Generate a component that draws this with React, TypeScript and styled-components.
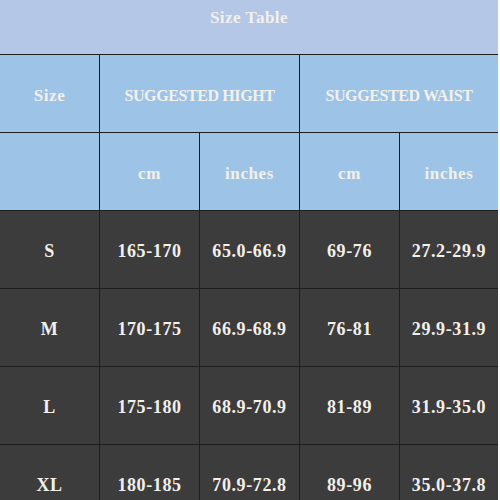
import React from 'react';
import styled, { createGlobalStyle } from 'styled-components';

const GlobalStyle = createGlobalStyle`
  html, body {
    margin: 0;
    padding: 0;
    background: #ffffff;
  }
  body {
    font-family: "Liberation Serif", "DejaVu Serif", serif;
  }
`;

type Row = { size: string; values: string[] };

const rows: Row[] = [
  { size: 'S', values: ['165-170', '65.0-66.9', '69-76', '27.2-29.9'] },
  { size: 'M', values: ['170-175', '66.9-68.9', '76-81', '29.9-31.9'] },
  { size: 'L', values: ['175-180', '68.9-70.9', '81-89', '31.9-35.0'] },
  { size: 'XL', values: ['180-185', '70.9-72.8', '89-96', '35.0-37.8'] },
];

const App: React.FC = () => (
  <>
    <GlobalStyle />
    <Table>
      <Title>Size Table</Title>
      <HeadCell>Size</HeadCell>
      <HeadCell $span={2} $caps>SUGGESTED HIGHT</HeadCell>
      <HeadCell $span={2} $caps>SUGGESTED WAIST</HeadCell>
      <HeadCell />
      <HeadCell>cm</HeadCell>
      <HeadCell>inches</HeadCell>
      <HeadCell>cm</HeadCell>
      <HeadCell>inches</HeadCell>
      {rows.map(row => (
        <React.Fragment key={row.size}>
          <DataCell>{row.size}</DataCell>
          {row.values.map((v, i) => (
            <DataCell key={i}>{v}</DataCell>
          ))}
        </React.Fragment>
      ))}
    </Table>
  </>
);

export default App;

const Table = styled.div`
  width: 498px;
  display: grid;
  grid-template-columns: 99px 99px 99px 99px 98px;
  grid-template-rows: 54px repeat(6, 77px);
  gap: 1px;
  background: #1e1e1e;
  font-weight: 700;
  color: #f2f0ea;
`;

const Title = styled.div`
  grid-column: 1 / -1;
  background: #b4c7e7;
  display: flex;
  justify-content: center;
  align-items: flex-start;
  padding-top: 8px;
  box-sizing: border-box;
  font-size: 17px;
  letter-spacing: 0.5px;
`;

const HeadCell = styled.div<{ $span?: number; $caps?: boolean }>`
  grid-column: span ${({ $span }) => $span ?? 1};
  background: #9dc3e6;
  display: flex;
  justify-content: center;
  align-items: center;
  padding-top: 4px;
  box-sizing: border-box;
  font-size: ${({ $caps }) => ($caps ? '16px' : '17px')};
  letter-spacing: ${({ $caps }) => ($caps ? '-0.4px' : '0.6px')};
`;

const DataCell = styled.div`
  background: #3c3c3c;
  display: flex;
  justify-content: center;
  align-items: center;
  padding-top: 4px;
  box-sizing: border-box;
  font-size: 18px;
  letter-spacing: 0.6px;
`;
